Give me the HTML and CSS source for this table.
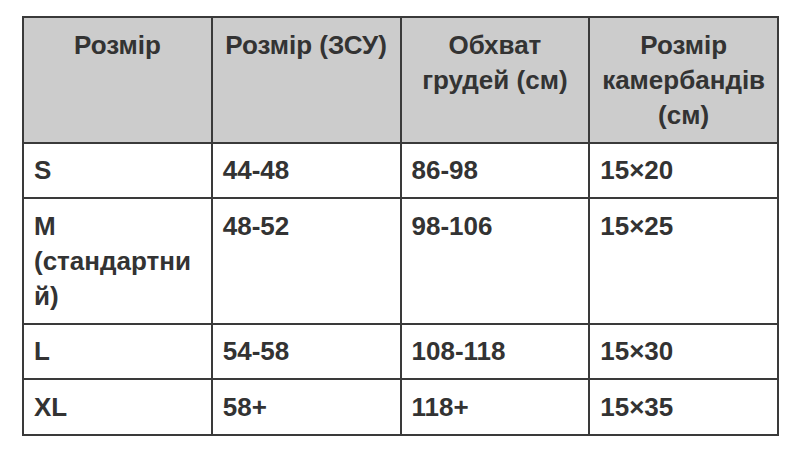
FILE: index.html
```html
<!DOCTYPE html>
<html lang="uk">
<head>
<meta charset="utf-8">
<title>Розмірна сітка</title>
<link rel="stylesheet" href="styles.css">
</head>
<body>
<table class="sizes">
  <thead>
    <tr>
      <th>Розмір</th>
      <th>Розмір (ЗСУ)</th>
      <th>Обхват грудей (см)</th>
      <th>Розмір камербандів (см)</th>
    </tr>
  </thead>
  <tbody>
    <tr><td>S</td><td>44-48</td><td>86-98</td><td>15×20</td></tr>
    <tr><td>M (стандартний)</td><td>48-52</td><td>98-106</td><td>15×25</td></tr>
    <tr><td>L</td><td>54-58</td><td>108-118</td><td>15×30</td></tr>
    <tr><td>XL</td><td>58+</td><td>118+</td><td>15×35</td></tr>
  </tbody>
</table>
</body>
</html>
```
FILE: styles.css
```css
html, body {
  margin: 0;
  background: #ffffff;
}
body {
  padding: 16px 0 0 22px;
  font-family: "Liberation Sans", Arial, sans-serif;
  color: #333333;
}
.sizes {
  border-collapse: collapse;
  table-layout: fixed;
  width: 757px;
}
.sizes th,
.sizes td {
  border: 2px solid #3a3a3a;
  padding: 9.5px 10px 9px;
  font-size: 26px;
  line-height: 35px;
  font-weight: bold;
  vertical-align: top;
  overflow-wrap: break-word;
}
.sizes th {
  background: #cccccc;
  text-align: center;
}
.sizes td {
  text-align: left;
}
```
